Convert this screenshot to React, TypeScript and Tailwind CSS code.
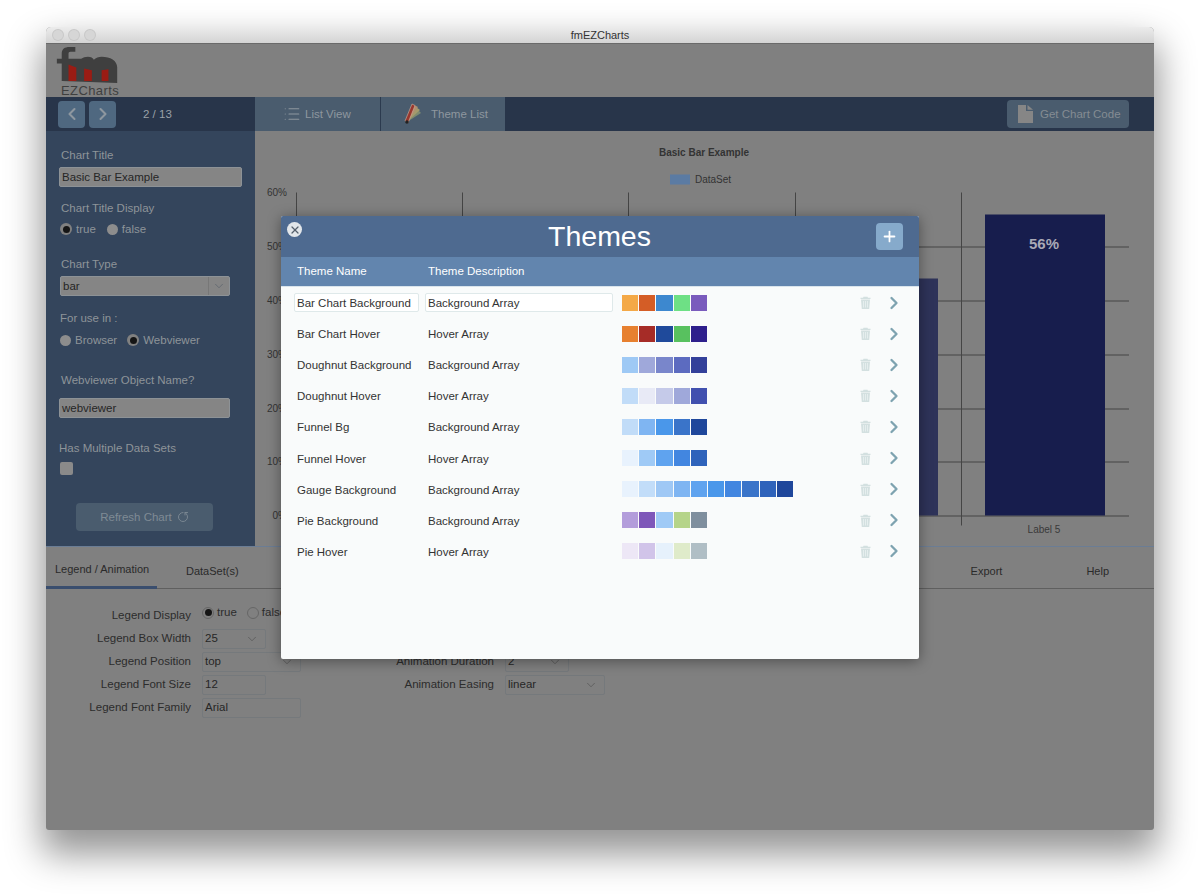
import { ChevronDown, ChevronLeft, ChevronRight, List, Plus, RotateCw, X } from "lucide-react";

const themes = [
  { name: "Bar Chart Background", desc: "Background Array", colors: ["#f4a947", "#d45d26", "#3d88cf", "#6ee085", "#7a5bbd"] },
  { name: "Bar Chart Hover", desc: "Hover Array", colors: ["#e7802f", "#a62c27", "#1f4a9b", "#58c15f", "#2e1f8c"] },
  { name: "Doughnut Background", desc: "Background Array", colors: ["#9ec9f5", "#9fa8da", "#7986cb", "#5c6bc0", "#33409a"] },
  { name: "Doughnut Hover", desc: "Hover Array", colors: ["#c1dcf8", "#e8eaf6", "#c5cae9", "#9fa8da", "#4150af"] },
  { name: "Funnel Bg", desc: "Background Array", colors: ["#c1dcf8", "#7fb5f2", "#4a97ea", "#3a74c9", "#1f479b"] },
  { name: "Funnel Hover", desc: "Hover Array", colors: ["#e8f2fd", "#9fcaf6", "#5fa3ef", "#4286e0", "#2f63bb"] },
  {
    name: "Gauge Background",
    desc: "Background Array",
    colors: ["#e8f2fd", "#c2ddf9", "#9fc8f5", "#7fb5f2", "#5fa3ef", "#4a97ea", "#4286e0", "#3a74c9", "#2f63bb", "#1f479b"],
  },
  { name: "Pie Background", desc: "Background Array", colors: ["#b39ddb", "#7e57b9", "#9fcaf6", "#b5d48a", "#7f8f9e"] },
  { name: "Pie Hover", desc: "Hover Array", colors: ["#ede7f6", "#d1c4e9", "#e6f1fc", "#dfebca", "#b0bec5"] },
];

function Logo() {
  return (
    <svg width="64" height="38" viewBox="0 0 64 38">
      <path
        d="M5 36V18H0v-5h5V8c0-5 3-7 8-7h6v5h-5c-1.500 0-2 1-2 2v5h13c2-1 4-2 7-2 3 0 5 1 6 3 2-2 5-3 8-3 9 0 16 4 16 11v16z"
        fill="#3f3f3f"
      />
      <path d="M12 19l8 3v14h-8zM28 23l8 2v11h-8zM46 25l7-1v12h-7z" fill="#9a1c14" />
    </svg>
  );
}

function FanIcon() {
  return (
    <svg width="18" height="22" viewBox="0 0 18 22">
      <path d="M3 19L14 7l3 3z" fill="#7d8a70" />
      <path d="M3 19L12 4l4 3z" fill="#a39a6c" />
      <path d="M3 19L10 2l4 2z" fill="#b08f70" />
      <path d="M1 18L8 1l3 1.500L4 20z" fill="#98362e" stroke="#d0b6a0" strokeWidth="0.6" />
      <circle cx="3" cy="19" r="1.800" fill="#222" />
    </svg>
  );
}

function DocIcon() {
  return (
    <svg width="15" height="18" viewBox="0 0 15 18" fill="#868686">
      <path d="M0 0h8v6h7v12H0z" />
      <path d="M9.500 0L15 4.800H9.500z" />
    </svg>
  );
}

function TrashIcon() {
  return (
    <svg width="11" height="13" viewBox="0 0 11 13">
      <path d="M3.500 0.800h4L8 1.800h2.500v1.200H0.500V1.800H3z" fill="#d3e0e0" />
      <path d="M1 3.500h9L9.200 13H1.800z" fill="#d3e0e0" />
      <path d="M3.500 5v6.500M5.500 5v6.500M7.500 5v6.500" stroke="#eef4f4" strokeWidth="0.7" />
    </svg>
  );
}

function ChartArea() {
  const vLines = [296, 462, 628, 795, 961];
  const hLines = [246, 300, 354, 408, 461, 515];
  const yTicks = [192, ...hLines];
  const yLabels = ["60%", "50%", "40%", "30%", "20%", "10%", "0%"];
  return (
    <svg className="block h-full w-full" viewBox="255 131 899 414">
      <text x="704" y="155" textAnchor="middle" fontSize="10" fontWeight="700" fill="#333">
        Basic Bar Example
      </text>
      <rect x="670" y="174" width="20" height="10" fill="#5b7ba3" />
      <text x="695" y="182.500" fontSize="10" fill="#333">
        DataSet
      </text>
      {hLines.map((y) => (
        <line key={y} x1="296" x2="1129" y1={y + 0.5} y2={y + 0.5} stroke="#454545" />
      ))}
      {vLines.map((x) => (
        <line key={x} x1={x + 0.5} x2={x + 0.5} y1="192" y2="525" stroke="#454545" />
      ))}
      {yLabels.map((label, i) => (
        <text key={label} x="287" y={yTicks[i] + 3} textAnchor="end" fontSize="10" fill="#333">
          {label}
        </text>
      ))}
      <rect x="818" y="278" width="120" height="237" fill="#2e3359" />
      <rect x="985" y="214" width="120" height="301" fill="#171d4d" />
      <text x="1044" y="248" textAnchor="middle" fontSize="15" fontWeight="700" fill="#a9a9b6">
        56%
      </text>
      <text x="1044" y="532" textAnchor="middle" fontSize="10" fill="#3a3a3a">
        Label 5
      </text>
    </svg>
  );
}

function Radio({ label, checked }: { label: string; checked?: boolean }) {
  return (
    <span className="flex items-center gap-[4px]">
      {checked ? (
        <span className="flex h-[12px] w-[12px] items-center justify-center rounded-full bg-[#808080]">
          <span className="h-[7px] w-[7px] rounded-full bg-[#151515]" />
        </span>
      ) : (
        <span className="h-[11px] w-[11px] rounded-full bg-[#8d8d8d]" />
      )}
      {label}
    </span>
  );
}

function Sidebar() {
  const label = "h-4 text-[11.500px] leading-4 text-[#8e9499]";
  const input = "h-[20px] rounded-[2px] border border-[#8d9296] bg-[#858585] px-[2px] text-[11.500px] leading-[18px] text-[#262626]";
  return (
    <aside className="flex w-[209px] shrink-0 flex-col bg-[#34455c] pl-[14px] pt-4">
      <div className={`ml-[1px] ${label}`}>Chart Title</div>
      <div className={`mt-1 w-[183px] -ml-[1px] ${input}`}>Basic Bar Example</div>
      <div className={`mt-[13px] ml-[1px] ${label}`}>Chart Title Display</div>
      <div className={`mt-[6px] flex h-[14px] items-center gap-[11px] ${label}`}>
        <Radio label="true" checked />
        <Radio label="false" />
      </div>
      <div className={`mt-[20px] ml-[1px] ${label}`}>Chart Type</div>
      <div className={`mt-1 flex w-[170px] items-center justify-between ${input}`}>
        bar
        <span className="-mr-[2px] flex h-full w-[21px] items-center justify-center border-l border-[#777]">
          <ChevronDown size={14} strokeWidth={1} color="#4f5a66" />
        </span>
      </div>
      <div className={`mt-[14px] ${label}`}>For use in :</div>
      <div className={`mt-[7px] flex h-[14px] items-center gap-[10px] ${label}`}>
        <Radio label="Browser" />
        <Radio label="Webviewer" checked />
      </div>
      <div className={`mt-[25px] ml-[1px] ${label}`}>Webviewer Object Name?</div>
      <div className={`mt-[10px] w-[171px] -ml-[1px] ${input}`}>webviewer</div>
      <div className={`mt-[22px] -ml-[1px] ${label}`}>Has Multiple Data Sets</div>
      <div className="mt-[6px] h-[13px] w-[13px] rounded-[2px] bg-[#8a8a8a]" />
      <button className="ml-[16px] mt-[28px] flex h-[28px] w-[137px] items-center justify-center gap-[5px] rounded-[4px] bg-[#4a5c6e] text-[11.500px] text-[#7f8b95]">
        <span className="pt-[1px]">Refresh Chart</span>
        <RotateCw size={12} strokeWidth={1.800} className="-scale-x-100 rotate-90" />
      </button>
    </aside>
  );
}

function Field({ children, arrow, className }: { children: string; arrow?: boolean; className: string }) {
  return (
    <div className={`flex h-[20px] items-center justify-between rounded-[2px] border border-[#75797c] pl-[2px] pr-[6px] text-[11.500px] text-[#262626] ${className}`}>
      {children}
      {arrow && <ChevronDown size={14} strokeWidth={1} color="#4a4a4a" />}
    </div>
  );
}

function FormRow({ label, labelWidth, children }: { label: string; labelWidth: string; children: React.ReactNode }) {
  return (
    <div className="flex h-[23px] items-center gap-[11px] text-[11.500px] text-[#2c2c2c]">
      <span className={`whitespace-nowrap pt-[1px] text-right ${labelWidth}`}>{label}</span>
      {children}
    </div>
  );
}

function BottomPanel() {
  return (
    <div className="flex-1">
      <div className="flex h-[43px] border-b border-[#5f5f5f] border-t border-t-[#6b7d95] text-[11px] text-[#2a2a2a]">
        <div className="-mb-[1px] flex w-[111px] items-center border-b-[3px] border-[#3a4e6e] pl-[9px] pt-[5px]">Legend / Animation</div>
        <div className="ml-[29px] flex items-center pt-[7px]">DataSet(s)</div>
        <div className="ml-auto flex items-center pt-[7px]">Export</div>
        <div className="ml-[84px] mr-[45px] flex items-center pt-[7px]">Help</div>
      </div>
      <div className="flex pt-[15px]">
        <div className="w-[350px] shrink-0">
          <FormRow label="Legend Display" labelWidth="w-[145px]">
            <div className="-mt-[6px] flex items-center gap-[10px]">
              <span className="flex items-center gap-[3px]">
                <span className="flex h-[12px] w-[12px] items-center justify-center rounded-full border border-[#666]">
                  <span className="h-[7px] w-[7px] rounded-full bg-[#151515]" />
                </span>
                true
              </span>
              <span className="flex items-center gap-[3px]">
                <span className="h-[12px] w-[12px] rounded-full border border-[#666]" />
                false
              </span>
            </div>
          </FormRow>
          <FormRow label="Legend Box Width" labelWidth="w-[145px]">
            <Field arrow className="w-[64px]">25</Field>
          </FormRow>
          <FormRow label="Legend Position" labelWidth="w-[145px]">
            <Field arrow className="w-[99px]">top</Field>
          </FormRow>
          <FormRow label="Legend Font Size" labelWidth="w-[145px]">
            <Field className="w-[64px]">12</Field>
          </FormRow>
          <FormRow label="Legend Font Family" labelWidth="w-[145px]">
            <Field className="w-[99px]">Arial</Field>
          </FormRow>
        </div>
        <div className="pt-[46px]">
          <FormRow label="Animation Duration" labelWidth="w-[98px]">
            <Field arrow className="w-[64px]">2</Field>
          </FormRow>
          <FormRow label="Animation Easing" labelWidth="w-[98px]">
            <Field arrow className="w-[100px]">linear</Field>
          </FormRow>
        </div>
      </div>
    </div>
  );
}

function ThemesModal() {
  return (
    <div className="flex h-[443px] w-[638px] flex-col overflow-hidden rounded-[2px] bg-[#f9fbfb] shadow-[0_2px_14px_rgba(0,0,0,0.4)]">
      <div className="grid h-[41px] shrink-0 grid-cols-[1fr_auto_1fr] items-center bg-[#4e6a90]">
        <button className="ml-[6px] -mt-[13px] flex h-[15px] w-[15px] items-center justify-center rounded-full bg-[#e2e6ea]">
          <X size={12} strokeWidth={2.500} color="#55606c" />
        </button>
        <div className="-ml-[1px] text-[28.500px] leading-none text-white">Themes</div>
        <button className="mr-4 flex h-[27px] w-[27px] items-center justify-center justify-self-end rounded-[4px] bg-[#86aacb]">
          <Plus size={17} strokeWidth={2.500} color="#fff" />
        </button>
      </div>
      <div className="flex h-[30px] shrink-0 items-center border-b border-[#d9e4ec] bg-[#6285ae] pl-4 text-[11.500px] font-medium text-white">
        <span className="w-[131px] pt-[1px]">Theme Name</span>
        <span className="pt-[1px]">Theme Description</span>
      </div>
      <div className="pt-[0.500px]">
        {themes.map((t, i) => (
          <div key={t.name} className="flex h-[31.120px] items-center pl-[13px] text-[11.500px] text-[#333]">
            <div className={`h-[19px] w-[125px] whitespace-nowrap rounded-[2px] border px-[2px] pt-[1px] leading-[17px] ${i === 0 ? "border-[#dfe9ea] bg-white" : "border-transparent"}`}>
              {t.name}
            </div>
            <div className={`ml-[6px] h-[19px] w-[188px] rounded-[2px] border px-[2px] pt-[1px] leading-[17px] ${i === 0 ? "border-[#dfe9ea] bg-white" : "border-transparent"}`}>
              {t.desc}
            </div>
            <div className="ml-[9px] flex flex-1 gap-[1px]">
              {t.colors.map((c, j) => (
                <span key={j} className="h-[16px] w-[16.200px]" style={{ backgroundColor: c }} />
              ))}
            </div>
            <TrashIcon />
            <ChevronRight size={20} strokeWidth={2.800} color="#7ea3b0" className="ml-[12.500px] mr-[15.500px]" />
          </div>
        ))}
      </div>
    </div>
  );
}

export default function App() {
  return (
    <div className="h-[896px] w-[1200px] bg-white pl-[46px] pt-[27px] [font-family:'Liberation_Sans',Arial,sans-serif]">
      <div className="flex h-[803px] w-[1108px] flex-col overflow-hidden rounded-t-[5px] rounded-b-[3px] bg-[#808080] shadow-[0_20px_36px_4px_rgba(0,0,0,0.42)]">
        <div className="relative flex h-[17px] shrink-0 items-center justify-center border-b border-[#6a6a6a] bg-gradient-to-b from-[#ececec] to-[#d4d4d4] text-[11px] text-[#333]">
          <div className="absolute left-[7px] flex gap-[6px]">
            <span className="h-[10px] w-[10px] rounded-full bg-[#d6d6d6] ring-1 ring-[#c8c8c8]" />
            <span className="h-[10px] w-[10px] rounded-full bg-[#d6d6d6] ring-1 ring-[#c8c8c8]" />
            <span className="h-[10px] w-[10px] rounded-full bg-[#d6d6d6] ring-1 ring-[#c8c8c8]" />
          </div>
          fmEZCharts
        </div>
        <div className="relative flex flex-1 flex-col">
          <div className="flex h-[53px] shrink-0 flex-col pl-[10px] pt-[2px]">
            <Logo />
            <span className="ml-[5px] mt-[1px] text-[13px] font-medium leading-[13px] tracking-[0.4px] text-[#3f3f3f]">EZCharts</span>
          </div>
          <div className="flex h-[34px] shrink-0 items-center bg-[#28354a] text-[11.500px]">
            <div className="flex w-[209px] items-center gap-[4px] pl-[12px]">
              <button className="flex h-[27px] w-[27px] items-center justify-center rounded-[4px] bg-[#4f6880]">
                <ChevronLeft size={20} strokeWidth={2.500} color="#8e979f" />
              </button>
              <button className="flex h-[27px] w-[27px] items-center justify-center rounded-[4px] bg-[#4f6880]">
                <ChevronRight size={20} strokeWidth={2.500} color="#8e979f" />
              </button>
              <span className="ml-[23px] pt-[1px] text-[#9aa1a8]">2 / 13</span>
            </div>
            <div className="flex h-full w-[126px] items-center gap-[4px] border-r border-[#2b3a4e] bg-[#4a5c6e] pl-[28px] text-[#8e979f]">
              <List size={18} strokeWidth={1.500} />
              <span className="pt-[1px]">List View</span>
            </div>
            <div className="flex h-full w-[124px] items-center gap-[9px] bg-[#4a5c6e] pl-[23px] text-[#8e979f]">
              <FanIcon />
              <span className="pt-[1px]">Theme List</span>
            </div>
            <button className="ml-auto mr-[25px] flex h-[28px] w-[122px] items-center gap-[7px] rounded-[4px] bg-[#4a5c6e] pl-[11px] text-[#858c93]">
              <DocIcon />
              <span className="pt-[1px]">Get Chart Code</span>
            </button>
          </div>
          <div className="flex h-[415px] shrink-0">
            <Sidebar />
            <div className="flex-1">
              <ChartArea />
            </div>
          </div>
          <BottomPanel />
          <div className="absolute inset-0 flex items-center justify-center">
            <ThemesModal />
          </div>
        </div>
      </div>
    </div>
  );
}
